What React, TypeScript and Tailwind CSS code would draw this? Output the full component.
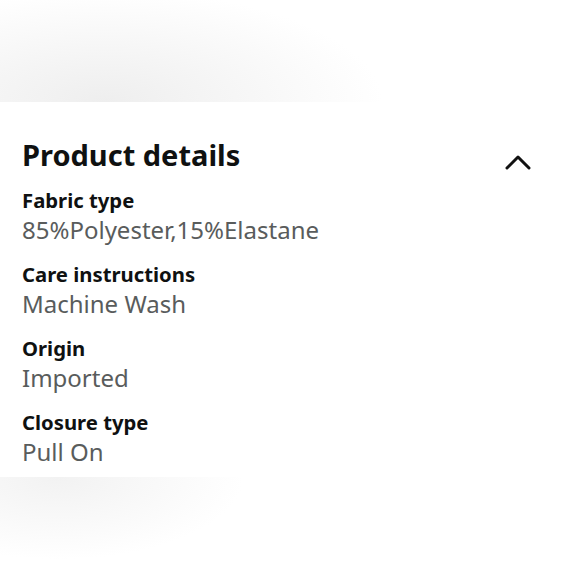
import React from "react";

const items = [
  { label: "Fabric type", value: "85%Polyester,15%Elastane" },
  { label: "Care instructions", value: "Machine Wash" },
  { label: "Origin", value: "Imported" },
  { label: "Closure type", value: "Pull On" },
];

export default function App() {
  return (
    <div
      className="w-[580px] h-[580px] flex flex-col bg-white overflow-hidden"
      style={{ fontFamily: '"Noto Sans", "Open Sans", sans-serif' }}
    >
      <div className="h-[102px] shrink-0 bg-[radial-gradient(ellipse_48%_110%_at_18%_100%,#eeeeee,#ffffff_100%)]" />
      <div className="h-[375px] shrink-0 bg-white px-[22px] pt-[33px]">
        <div className="flex items-center justify-between">
          <h2 className="text-[29px] leading-[40px] font-bold text-[#0f1111]">Product details</h2>
          <svg width="30" height="20" viewBox="0 0 30 20" className="mr-[25px] mt-[16px]">
            <path d="M4 15 L15 4 L26 15" fill="none" stroke="#111" strokeWidth="3" strokeLinecap="round" strokeLinejoin="round" />
          </svg>
        </div>
        <div className="flex flex-col gap-[14px] mt-[10px]">
          {items.map((it) => (
            <div key={it.label} className="flex flex-col">
              <div className="text-[20.3px] leading-[30px] font-bold text-[#0f1111]">{it.label}</div>
              <div className="text-[24px] leading-[30px] text-[#595c5c]">{it.value}</div>
            </div>
          ))}
        </div>
      </div>
      <div className="flex-1 bg-[radial-gradient(ellipse_32%_80%_at_10%_0%,#f2f2f2,#ffffff_100%)]" />
    </div>
  );
}
